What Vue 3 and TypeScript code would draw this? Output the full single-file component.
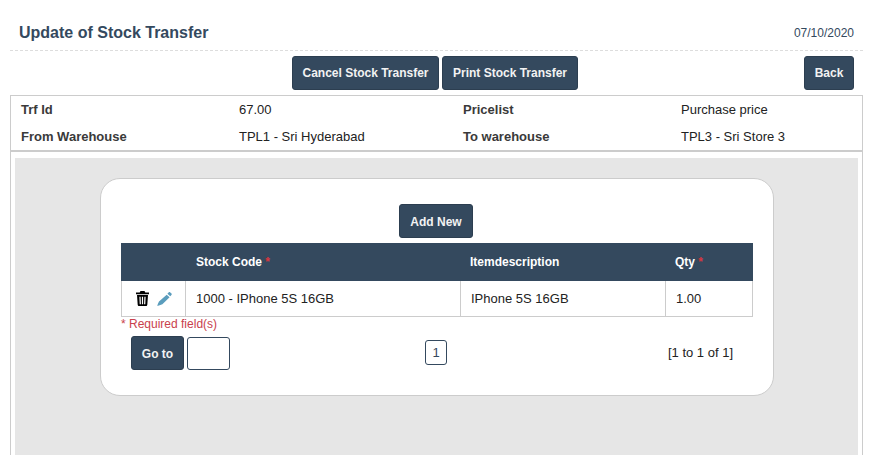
<script setup lang="ts">
const info = [
  ['Trf Id', '67.00', 'Pricelist', 'Purchase price'],
  ['From Warehouse', 'TPL1 - Sri Hyderabad', 'To warehouse', 'TPL3 - Sri Store 3'],
]
</script>

<template>
  <div class="page">
    <header class="title-bar">
      <h1>Update of Stock Transfer</h1>
      <span class="date">07/10/2020</span>
    </header>

    <div class="actions">
      <div class="actions-mid">
        <button class="btn btn-cancel">Cancel Stock Transfer</button>
        <button class="btn btn-print">Print Stock Transfer</button>
      </div>
      <button class="btn btn-back">Back</button>
    </div>

    <section class="panel">
      <div class="info">
        <div v-for="(row, i) in info" :key="i" class="info-row">
          <span class="lbl">{{ row[0] }}</span>
          <span>{{ row[1] }}</span>
          <span class="lbl">{{ row[2] }}</span>
          <span>{{ row[3] }}</span>
        </div>
      </div>

      <div class="canvas">
        <div class="card">
          <div class="add-row">
            <button class="btn btn-add">Add New</button>
          </div>

          <div class="grid-head">
            <span></span>
            <span>Stock Code <i>*</i></span>
            <span>Itemdescription</span>
            <span>Qty <i>*</i></span>
          </div>
          <div class="grid-row">
            <span class="cell-icons">
              <svg class="ico" width="13" height="15" viewBox="0 0 13 15" aria-hidden="true">
                <path fill="#000" fill-rule="evenodd" d="M4.500 0h4l.8 1.400H13v1.800H0V1.400h3.700zM1 4h11l-.7 9.700c-.1.800-.6 1.300-1.300 1.300H3c-.7 0-1.200-.5-1.300-1.300zm2.400 1.800.3 7.400h1.200l-.3-7.400zm2.500 0v7.400h1.200V5.800zm2.500 0-.3 7.400h1.200l.3-7.400z" />
              </svg>
              <svg class="ico" width="15" height="14" viewBox="0 0 15 14" aria-hidden="true">
                <path fill="#5b9dbd" d="M11.800.3c.4-.3.900-.3 1.200 0l1.500 1.300c.4.300.4.800.1 1.200l-1.300 1.500-2.900-2.500zM9.700 2.700l2.900 2.500-7.200 7.100L1.900 13.500l-1.600.4.500-1.900 1.200-2.600z" />
              </svg>
            </span>
            <span class="cell">1000 - IPhone 5S 16GB</span>
            <span class="cell">IPhone 5S 16GB</span>
            <span class="cell">1.00</span>
          </div>

          <div class="required">* Required field(s)</div>

          <div class="pager">
            <div class="goto">
              <button class="btn btn-goto">Go to</button>
              <input class="goto-input" type="text" />
            </div>
            <span class="page-no">1</span>
            <span class="count">[1 to 1 of 1]</span>
          </div>
        </div>
      </div>
    </section>
  </div>
</template>

<style>
html,
body {
  margin: 0;
  height: 455px;
  overflow: hidden;
  background: #fff;
}
</style>

<style scoped>
.page {
  width: 875px;
  height: 455px;
  box-sizing: border-box;
  padding: 0 12px 0 10px;
  overflow: hidden;
  font-family: 'Liberation Sans', Arial, sans-serif;
  font-size: 13px;
  color: #222;
}

.title-bar {
  height: 43px;
  display: flex;
  align-items: flex-end;
  justify-content: space-between;
  padding: 0 9px 7px;
  border-bottom: 1px dashed #ddd;
}

h1 {
  margin: 0;
  font-size: 16px;
  line-height: 18px;
  font-weight: 700;
  color: #34495e;
  padding-bottom: 1px;
}

.date {
  font-size: 12px;
  line-height: 18px;
  color: #34495e;
  margin-bottom: 1px;
}

.actions {
  display: flex;
  align-items: center;
  justify-content: space-between;
  padding: 5px 9px 0 0;
  height: 34px;
}

.actions-mid {
  display: flex;
  gap: 3px;
  margin-left: 282px;
}

.btn {
  height: 34px;
  padding: 0;
  border: 1px solid #2c3e50;
  border-radius: 3px;
  background: #34495e;
  color: #f2f2f2;
  font-family: inherit;
  font-size: 12px;
  font-weight: 700;
}

.btn-cancel {
  width: 147px;
}

.btn-print {
  width: 136px;
}

.btn-back {
  width: 50px;
}

.btn-add {
  width: 74px;
  padding-top: 2px;
}

.btn-goto {
  width: 53px;
  padding-top: 2px;
}

.panel {
  margin-top: 5px;
  height: 360px;
  box-sizing: border-box;
  border: 1px solid #ccc;
  border-bottom: 0;
}

.info {
  height: 56px;
  border-bottom: 2px solid #ccc;
  box-sizing: border-box;
}

.info-row {
  display: grid;
  grid-template-columns: 218px 224px 218px 1fr;
  padding-left: 10px;
  height: 27px;
  align-items: center;
  color: #222;
}

.lbl {
  font-weight: 700;
  color: #3a3a3a;
}

.canvas {
  margin: 6px 4px 0;
  height: 320px;
  background: #e6e6e6;
  padding: 20px 84px 0 85px;
  box-sizing: border-box;
}

.card {
  width: 674px;
  height: 218px;
  box-sizing: border-box;
  background: #fff;
  border: 1px solid #ccc;
  border-radius: 20px;
  padding: 25px 20px 0;
}

.add-row {
  display: flex;
  justify-content: center;
  height: 34px;
  margin-bottom: 5px;
  padding-right: 2px;
}

.grid-head,
.grid-row {
  display: grid;
}

.grid-head {
  grid-template-columns: 64px 275px 205px 1fr;
  height: 38px;
  align-items: center;
  background: #34495e;
  color: #fff;
  font-size: 12px;
  font-weight: 700;
}

.grid-head span:nth-child(n + 2) {
  padding-left: 11px;
}

.grid-head span:nth-child(n + 3) {
  padding-left: 10px;
}

.grid-head i {
  font-style: normal;
  color: #d9363e;
}

.grid-row {
  grid-template-columns: 63px 275px 205px 1fr;
  height: 36px;
  box-sizing: border-box;
  border: 1px solid #ccc;
  border-top: 0;
}

.cell-icons {
  display: flex;
  align-items: center;
  gap: 8px;
  padding-left: 14px;
}

.cell {
  display: flex;
  align-items: center;
  padding-left: 10px;
  border-left: 1px solid #ccc;
}

.required {
  font-size: 12px;
  line-height: 14px;
  color: #c9414c;
}

.pager {
  display: grid;
  grid-template-columns: 294px 22px 1fr;
  margin-top: 5px;
  height: 34px;
  padding: 0 20px 0 10px;
}

.goto {
  display: flex;
  align-items: flex-end;
  gap: 3px;
}

.goto-input {
  width: 43px;
  height: 33px;
  box-sizing: border-box;
  border: 1px solid #34495e;
  border-radius: 3px;
  background: #fff;
}

.page-no {
  height: 25px;
  margin-top: 4px;
  box-sizing: border-box;
  border: 1px solid #34495e;
  border-radius: 3px;
  display: flex;
  align-items: center;
  justify-content: center;
  font-size: 13px;
  color: #34495e;
}

.count {
  justify-self: end;
  margin-top: 9px;
  line-height: 15px;
  color: #222;
}
</style>
